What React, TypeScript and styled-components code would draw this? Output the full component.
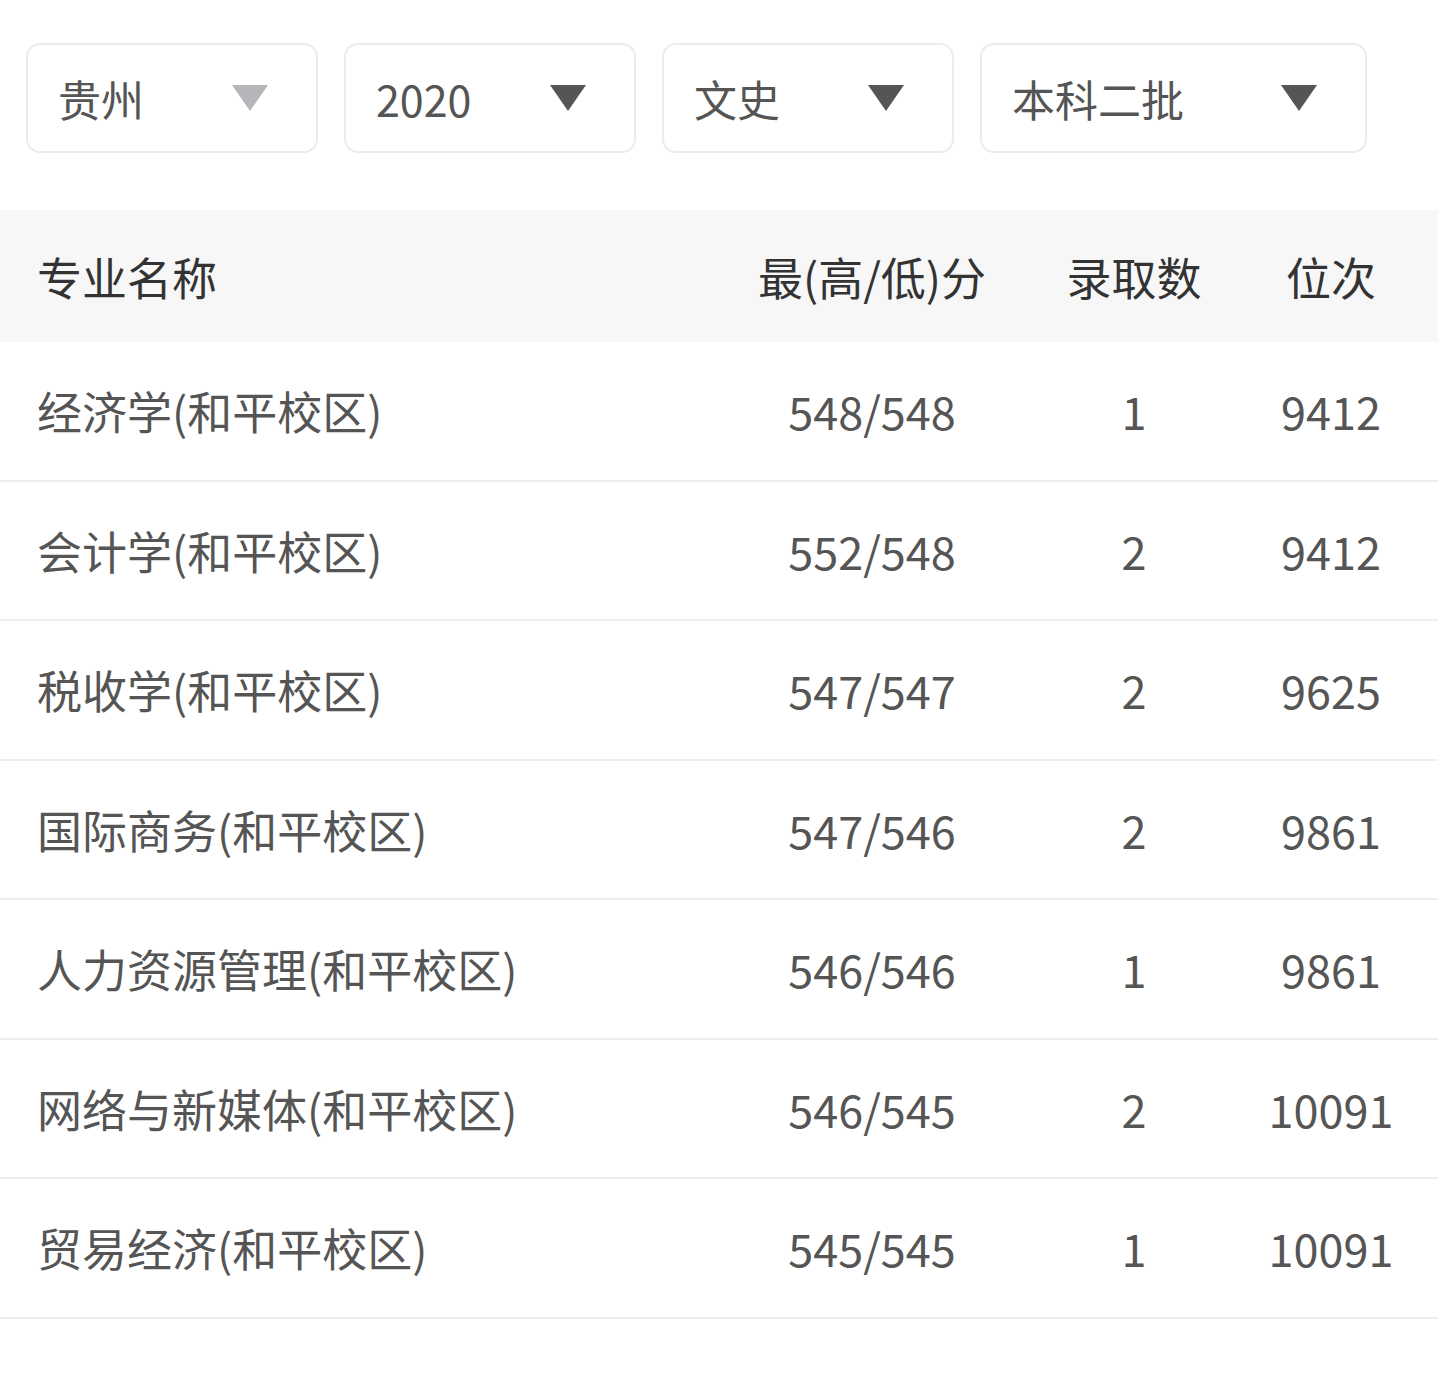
import styled, { createGlobalStyle } from "styled-components";

const Global = createGlobalStyle`
  body {
    margin: 0;
    background: #fff;
    font-family: "Noto Sans CJK SC", "Noto Sans", sans-serif;
  }
`;

const filters = [
  { label: "贵州", muted: true, width: 292 },
  { label: "2020", muted: false, width: 292 },
  { label: "文史", muted: false, width: 292 },
  { label: "本科二批", muted: false, width: 387 },
];

const rows = [
  ["经济学(和平校区)", "548/548", "1", "9412"],
  ["会计学(和平校区)", "552/548", "2", "9412"],
  ["税收学(和平校区)", "547/547", "2", "9625"],
  ["国际商务(和平校区)", "547/546", "2", "9861"],
  ["人力资源管理(和平校区)", "546/546", "1", "9861"],
  ["网络与新媒体(和平校区)", "546/545", "2", "10091"],
  ["贸易经济(和平校区)", "545/545", "1", "10091"],
];

export default function App() {
  return (
    <Page>
      <Global />
      <FilterBar>
        {filters.map((f) => (
          <Select key={f.label} $width={f.width}>
            <SelectLabel>{f.label}</SelectLabel>
            <Arrow $muted={f.muted} />
          </Select>
        ))}
      </FilterBar>
      <HeadRow>
        <HeadCell>专业名称</HeadCell>
        <HeadCell $center>最(高/低)分</HeadCell>
        <HeadCell $center>录取数</HeadCell>
        <HeadCell $center>位次</HeadCell>
      </HeadRow>
      {rows.map((r) => (
        <Row key={r[0]}>
          <Cell>{r[0]}</Cell>
          <Cell $center>{r[1]}</Cell>
          <Cell $center>{r[2]}</Cell>
          <Cell $center>{r[3]}</Cell>
        </Row>
      ))}
    </Page>
  );
}

const Page = styled.div`
  width: 1438px;
  min-height: 1395px;
  background: #fff;
`;

const FilterBar = styled.div`
  display: flex;
  gap: 26px;
  padding: 43px 26px 57px;
`;

const Select = styled.div<{ $width: number }>`
  width: ${(p) => p.$width}px;
  height: 110px;
  box-sizing: border-box;
  border: 2px solid #ececec;
  border-radius: 14px;
  display: flex;
  align-items: center;
  justify-content: space-between;
  padding: 0 48px 0 30px;
`;

const SelectLabel = styled.span`
  font-size: 43px;
  color: #555;
`;

const Arrow = styled.span<{ $muted: boolean }>`
  width: 0;
  height: 0;
  border-left: 18px solid transparent;
  border-right: 18px solid transparent;
  border-top: 26px solid ${(p) => (p.$muted ? "#b4b6b9" : "#555")};
`;

const grid = `
  display: grid;
  grid-template-columns: 1fr 260px 264px 130px;
  align-items: center;
  padding: 0 42px 0 37px;
  box-sizing: border-box;
`;

const HeadRow = styled.div`
  ${grid}
  height: 132px;
  background: #f7f7f7;
`;

const HeadCell = styled.div<{ $center?: boolean }>`
  font-size: 45px;
  color: #333;
  text-align: ${(p) => (p.$center ? "center" : "left")};
  white-space: nowrap;
`;

const Row = styled.div`
  ${grid}
  height: 139.5px;
  border-bottom: 2px solid #eee;
`;

const Cell = styled.div<{ $center?: boolean }>`
  font-size: 45px;
  color: #555;
  text-align: ${(p) => (p.$center ? "center" : "left")};
  white-space: nowrap;
`;
